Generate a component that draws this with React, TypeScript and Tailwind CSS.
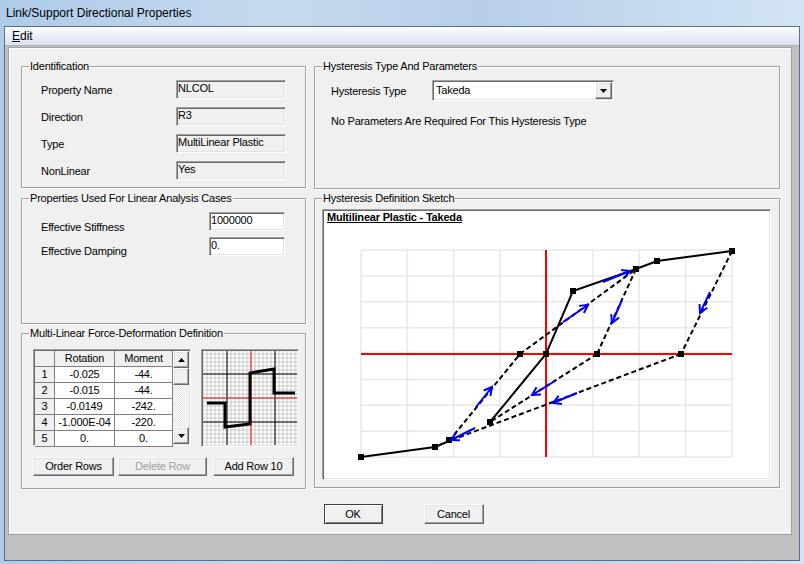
import React from 'react';

const sunken =
  'border border-t-[#a0a0a0] border-l-[#a0a0a0] border-b-white border-r-white shadow-[inset_1px_1px_0_#696969,inset_-1px_-1px_0_#e3e3e3]';
const raised =
  'border border-t-white border-l-white border-b-[#696969] border-r-[#696969] shadow-[inset_-1px_-1px_0_#a0a0a0,inset_1px_1px_0_#e3e3e3]';

const Group: React.FC<{ label: string; className?: string; children?: React.ReactNode }> = ({ label, className, children }) => (
  <fieldset className={`border border-[#a0a0a0] shadow-[1px_1px_0_#fff,inset_1px_1px_0_#fff] ${className ?? ''}`}>
    <legend className="ml-[7px] px-[1px] text-[11px] leading-[13px]">{label}</legend>
    {children}
  </fieldset>
);

const ReadOnlyRow: React.FC<{ label: string; value: string }> = ({ label, value }) => (
  <div className="flex h-[19px]">
    <div className="w-[154px] pl-[19px] pt-[4px] leading-[13px]">{label}</div>
    <div className={`${sunken} w-[110px] bg-[#f0f0f0] pl-[1px] leading-[15px]`}>{value}</div>
  </div>
);

const rows = [
  ['1', '-0.025', '-44.'],
  ['2', '-0.015', '-44.'],
  ['3', '-0.0149', '-242.'],
  ['4', '-1.000E-04', '-220.'],
  ['5', '0.', '0.'],
];

const Tri: React.FC<{ up?: boolean }> = ({ up }) => (
  <svg width="7" height="4" viewBox="0 0 7 4">
    <polygon points={up ? '0,4 7,4 3.5,0' : '0,0 7,0 3.5,4'} fill="#000" />
  </svg>
);

function head(x1: number, y1: number, x2: number, y2: number, len = 9, ang = 0.5) {
  const a = Math.atan2(y2 - y1, x2 - x1);
  const p1 = [x2 - len * Math.cos(a - ang), y2 - len * Math.sin(a - ang)];
  const p2 = [x2 - len * Math.cos(a + ang), y2 - len * Math.sin(a + ang)];
  return `M${p1[0]},${p1[1]} L${x2},${y2} L${p2[0]},${p2[1]}`;
}

const arrows: [number, number, number, number][] = [
  [477, 407, 493, 387],
  [476, 428, 452, 440],
  [556, 381, 533, 395],
  [578, 393, 554, 403],
  [564, 322, 589, 305],
  [604, 282, 631, 271],
  [623, 300, 613, 323],
  [711, 292, 701, 313],
];

const dashed: [number, number, number, number][] = [
  [450, 441, 521, 354],
  [521, 354, 637, 269],
  [637, 269, 598, 354],
  [598, 354, 491, 422],
  [733, 251, 682, 354],
  [682, 354, 450, 441],
];

const markers: [number, number][] = [
  [362, 457], [436, 447], [450, 440], [491, 422], [521, 354], [547, 354],
  [574, 291], [637, 269], [658, 261], [733, 251], [598, 354], [682, 354],
];

const SketchChart = () => {
  const xs = Array.from({ length: 9 }, (_, i) => 362 + 46.375 * i);
  const ys = Array.from({ length: 9 }, (_, i) => 250 + 25.875 * i);
  return (
    <svg width="445" height="253" viewBox="324 224 445 253" className="block">
      {xs.map((x) => (
        <line key={'x' + x} x1={x} y1={250} x2={x} y2={457} stroke="#e8e8e8" strokeWidth="1.5" />
      ))}
      {ys.map((y) => (
        <line key={'y' + y} x1={362} y1={y} x2={733} y2={y} stroke="#e8e8e8" strokeWidth="1.5" />
      ))}
      <line x1={547} y1={250} x2={547} y2={457} stroke="#ff0000" strokeWidth="2" />
      <line x1={362} y1={354} x2={733} y2={354} stroke="#ff0000" strokeWidth="2" />
      {dashed.map(([a, b, c, d], i) => (
        <line key={'d' + i} x1={a} y1={b} x2={c} y2={d} stroke="#000" strokeWidth="2" strokeDasharray="5 3" />
      ))}
      <polyline points="362,457 436,447 450,441" fill="none" stroke="#000" strokeWidth="2" />
      <polyline points="491,422 547,354 574,291 637,269 658,261 733,251" fill="none" stroke="#000" strokeWidth="2" />
      {markers.map(([x, y], i) => (
        <rect key={'m' + i} x={x - 3} y={y - 3} width="6" height="6" fill="#000" />
      ))}
      {arrows.map(([a, b, c, d], i) => (
        <g key={'a' + i} stroke="#0000ff" strokeWidth="2" fill="none">
          <line x1={a} y1={b} x2={c} y2={d} />
          <path d={head(a, b, c, d)} />
        </g>
      ))}
    </svg>
  );
};

const MiniChart = () => {
  const fine: number[] = [];
  for (let v = -48; v <= 48; v += 4) fine.push(v);
  return (
    <svg width="94" height="94" viewBox="204 350 94 94" className="block">
      <rect x="204" y="350" width="94" height="94" fill="#fff" />
      {fine.map((v) => (
        <g key={v}>
          <line x1={252 + v} y1={350} x2={252 + v} y2={444} stroke="#c8c8c8" strokeWidth="1" />
          <line x1={204} y1={397 + v} x2={298} y2={397 + v} stroke="#c8c8c8" strokeWidth="1" />
        </g>
      ))}
      <line x1={228} y1={350} x2={228} y2={444} stroke="#000" strokeWidth="1" />
      <line x1={276} y1={350} x2={276} y2={444} stroke="#000" strokeWidth="1" />
      <line x1={204} y1={373} x2={298} y2={373} stroke="#000" strokeWidth="1" />
      <line x1={204} y1={421} x2={298} y2={421} stroke="#000" strokeWidth="1" />
      <line x1={252} y1={350} x2={252} y2={444} stroke="#ff0000" strokeWidth="1" />
      <line x1={204} y1={397} x2={298} y2={397} stroke="#ff0000" strokeWidth="1" />
      <polyline
        points="208,402 226,402 226,426 251,423 251,372 275,368 275,392 296,392"
        fill="none"
        stroke="#000"
        strokeWidth="3"
      />
    </svg>
  );
};

export default function App() {
  return (
    <div className="flex h-[564px] w-[804px] flex-col overflow-hidden bg-[linear-gradient(90deg,#aecbe9_0%,#c6daef_35%,#b7cfe9_60%,#d3e4f5_100%)] font-['Liberation_Sans',Arial,sans-serif] text-[11px] text-black">
      <div className="flex h-[26px] items-center pl-[6px] text-[12px]">Link/Support Directional Properties</div>

      <div className="ml-[4px] flex h-[535px] w-[796px] flex-col border border-[#5b6e82] bg-[#c0c0c0]">
        <div className="flex h-[19px] items-center border-b border-[#a9b0c4] bg-[linear-gradient(#fbfcfe,#dce1ef)] pl-[7px] text-[12px]">
          <span>
            <span className="underline">E</span>dit
          </span>
        </div>

        <div className="flex flex-1 flex-col pb-[25px] pl-[3px] pr-[7px] pt-[1px]">
          <div className="flex flex-1 flex-col border border-[#a0a0a0] bg-[#f0f0f0] tracking-[-0.2px] shadow-[inset_1px_1px_0_#fff]">
            <div className="flex gap-[8px] pl-[12px] pr-[11px] pt-[12px]">
              {/* left column */}
              <div className="flex w-[285px] flex-col">
                <Group label="Identification" className="h-[128px]">
                  <div className="flex flex-col gap-[8px] pt-[7px]">
                    <ReadOnlyRow label="Property Name" value="NLCOL" />
                    <ReadOnlyRow label="Direction" value="R3" />
                    <ReadOnlyRow label="Type" value="MultiLinear Plastic" />
                    <ReadOnlyRow label="NonLinear" value="Yes" />
                  </div>
                </Group>

                <Group label="Properties Used For Linear Analysis Cases" className="mt-[4px] h-[132px]">
                  <div className="flex flex-col gap-[6px] pt-[7px]">
                    <div className="flex h-[19px]">
                      <div className="w-[187px] pl-[19px] pt-[9px] leading-[13px]">Effective Stiffness</div>
                      <div className={`${sunken} w-[76px] bg-white pl-[1px] leading-[15px]`}>1000000</div>
                    </div>
                    <div className="flex h-[19px]">
                      <div className="w-[187px] pl-[19px] pt-[8px] leading-[13px]">Effective Damping</div>
                      <div className={`${sunken} w-[76px] bg-white pl-[1px] leading-[15px]`}>0.</div>
                    </div>
                  </div>
                </Group>

                <Group label="Multi-Linear Force-Deformation Definition" className="mt-[3px] h-[162px]">
                  <div className="flex gap-[10px] pl-[11px] pt-[9px]">
                    <div className={`${sunken} flex h-[97px] w-[158px] bg-white p-[1px]`}>
                      <div className="flex w-[138px] flex-col">
                        <div className="flex h-[16px] shrink-0 bg-[#f0f0f0]">
                          <div className="w-[20px] border-b border-r border-[#808080]" />
                          <div className="w-[60px] border-b border-r border-[#808080] text-center leading-[15px]">Rotation</div>
                          <div className="w-[58px] border-b border-r border-[#808080] text-center leading-[15px]">Moment</div>
                        </div>
                        {rows.map((r) => (
                          <div key={r[0]} className="flex h-[16px] shrink-0">
                            <div className="w-[20px] border-b border-r border-[#808080] bg-[#f0f0f0] text-center leading-[15px]">{r[0]}</div>
                            <div className="w-[60px] border-b border-r border-[#808080] bg-white text-center leading-[15px]">{r[1]}</div>
                            <div className="w-[58px] border-b border-r border-[#808080] bg-white text-center leading-[15px]">{r[2]}</div>
                          </div>
                        ))}
                      </div>
                      <div className="flex w-[17px] flex-col bg-[repeating-conic-gradient(#ffffff_0_25%,#e4e4e4_0_50%)] bg-[length:2px_2px]">
                        <div className={`${raised} flex h-[17px] items-center justify-center bg-[#f0f0f0]`}>
                          <Tri up />
                        </div>
                        <div className={`${raised} h-[17px] bg-[#f0f0f0]`} />
                        <div className="flex-1" />
                        <div className={`${raised} flex h-[17px] items-center justify-center bg-[#f0f0f0]`}>
                          <Tri />
                        </div>
                      </div>
                    </div>
                    <div className={`${sunken} h-[98px] w-[98px] p-[1px]`}>
                      <MiniChart />
                    </div>
                  </div>
                  <div className="flex gap-[4px] pl-[11px] pt-[10px]">
                    <button className={`${raised} h-[19px] w-[81px] bg-[#f0f0f0] leading-[15px]`}>Order Rows</button>
                    <button className={`${raised} h-[19px] w-[89px] bg-[#f0f0f0] leading-[15px] text-[#a0a0a0]`}>Delete Row</button>
                    <button className={`${raised} ml-[2px] h-[19px] w-[81px] bg-[#f0f0f0] leading-[15px]`}>Add Row 10</button>
                  </div>
                </Group>
              </div>

              {/* right column */}
              <div className="flex w-[466px] flex-col">
                <Group label="Hysteresis Type And Parameters" className="h-[129px]">
                  <div className="flex items-start pl-[16px] pt-[7px]">
                    <div className="w-[101px] pt-[5px] leading-[13px]">Hysteresis Type</div>
                    <div className={`${sunken} flex h-[21px] w-[182px] items-center justify-between bg-white pl-[3px] pr-[1px]`}>
                      <span className="leading-[13px]">Takeda</span>
                      <div className={`${raised} flex h-[17px] w-[17px] items-center justify-center bg-[#f0f0f0]`}>
                        <Tri />
                      </div>
                    </div>
                  </div>
                  <div className="pl-[16px] pt-[14px] leading-[13px]">No Parameters Are Required For This Hysteresis Type</div>
                </Group>

                <Group label="Hysteresis Definition Sketch" className="mt-[3px] h-[296px]">
                  <div className="pl-[7px] pt-[4px]">
                    <div className={`${sunken} flex h-[271px] w-[449px] flex-col bg-white`}>
                      <div className="h-[14px] pl-[4px] pt-[1px] font-bold leading-[13px] underline">Multilinear Plastic - Takeda</div>
                      <SketchChart />
                    </div>
                  </div>
                </Group>
              </div>
            </div>

            <div className="mt-[15px] flex justify-center gap-[41px] pl-[7px]">
              <button className="h-[20px] w-[59px] border border-[#404040] bg-[#f0f0f0] leading-[16px] shadow-[inset_1px_1px_0_#fff,inset_-1px_-1px_0_#808080]">
                OK
              </button>
              <button className={`${raised} h-[20px] w-[60px] bg-[#f0f0f0] leading-[16px]`}>Cancel</button>
            </div>
          </div>
        </div>
      </div>
    </div>
  );
}
